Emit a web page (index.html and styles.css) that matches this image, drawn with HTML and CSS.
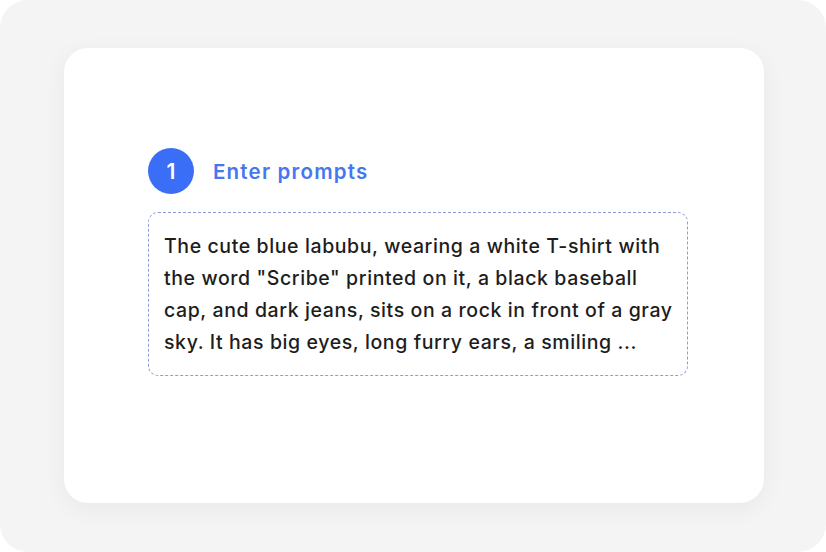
FILE: index.html
```html
<!DOCTYPE html>
<html>
<head>
<meta charset="utf-8">
<link rel="stylesheet" href="styles.css">
</head>
<body>
<div class="frame">
  <div class="card">
    <div class="step">
      <div class="step-head">
        <span class="num">1</span>
        <span class="title">Enter prompts</span>
      </div>
      <div class="prompt">The cute blue labubu, wearing a white T-shirt with<br>the word "Scribe" printed on it, a black baseball<br>cap, and dark jeans, sits on a rock in front of a gray<br>sky. It has big eyes, long furry ears, a smiling ...</div>
    </div>
  </div>
</div>
</body>
</html>
```
FILE: styles.css
```css
html, body { margin: 0; padding: 0; background: #ffffff; }
.frame {
  width: 826px;
  height: 552px;
  background: #f4f4f5;
  border-radius: 28px;
  padding: 48px 62px 49px 64px;
  box-sizing: border-box;
}
.card {
  width: 700px;
  height: 455px;
  background: #ffffff;
  border-radius: 24px;
  box-shadow: 0 6px 24px rgba(0,0,0,0.05);
  padding: 100px 76px 0 84px;
  box-sizing: border-box;
}
.step-head {
  display: flex;
  align-items: center;
  height: 46px;
}
.num {
  width: 46px;
  height: 46px;
  border-radius: 50%;
  background: #3b6ef6;
  color: #fff;
  font-family: Inter, sans-serif;
  font-weight: 600;
  font-size: 21px;
  display: flex;
  align-items: center;
  justify-content: center;
}
.title {
  margin-left: 19px;
  font-family: Inter, sans-serif;
  font-weight: 600;
  font-size: 20.5px;
  letter-spacing: 1.2px;
  color: #4677f0;
}
.prompt {
  margin-top: 18px;
  width: 540px;
  height: 164px;
  box-sizing: border-box;
  border: 1px dashed #8c9be0;
  border-radius: 10px;
  padding: 17px 4px 0 15px;
  font-family: Inter, sans-serif;
  font-weight: 500;
  font-size: 19.5px;
  letter-spacing: 0.6px;
  line-height: 32px;
  white-space: nowrap;
  color: #1d1d1d;
}
```
